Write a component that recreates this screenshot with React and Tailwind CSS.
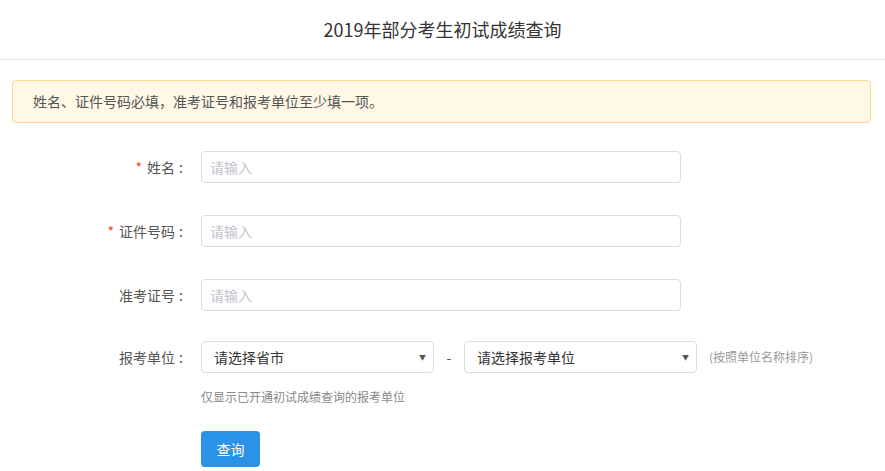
import React from 'react'

const font = { fontFamily: '"Noto Sans CJK SC", "Noto Sans", sans-serif' }

function Label({ required, children }) {
  return (
    <div className="w-[183px] shrink-0 text-right text-[14px] text-[#555]">
      {required && <span className="mr-[5px] text-[#e6461e]">*</span>}
      {children}
      <span className="ml-[4px]">:</span>
    </div>
  )
}

function TextRow({ label, required }) {
  return (
    <div className="flex h-[32px] items-center gap-[18px]">
      <Label required={required}>{label}</Label>
      <input
        placeholder="请输入"
        className="h-[32px] w-[480px] rounded-[4px] border border-[#dcdcdc] px-2 text-[14px] text-[#333] outline-none placeholder:text-[#c0c4cc]"
      />
    </div>
  )
}

function Select({ text }) {
  return (
    <div className="flex h-[32px] w-[233px] items-center justify-between rounded-[4px] border border-[#dcdcdc] pl-3 pr-[7px] text-[14px] text-[#333]">
      <span>{text}</span>
      <span className="text-[7px] text-[#555]">▼</span>
    </div>
  )
}

export default function App() {
  return (
    <div className="min-h-[471px] bg-white" style={font}>
      <div className="flex h-[60px] items-center justify-center border-b border-[#e5e5e5] text-[18px] text-[#333]">
        2019年部分考生初试成绩查询
      </div>

      <div className="mx-3 mt-5 flex h-[43px] items-center rounded-[4px] border border-[#fbd88e] bg-[#fff8e6] px-5 text-[14px] text-[#555] mr-[14px]">
        姓名、证件号码必填，准考证号和报考单位至少填一项。
      </div>

      <div className="mt-[28px] flex flex-col">
        <TextRow label="姓名" required />
        <div className="h-[32px]" />
        <TextRow label="证件号码" required />
        <div className="h-[32px]" />
        <TextRow label="准考证号" />
        <div className="h-[30px]" />

        <div className="flex h-[32px] items-center gap-[18px]">
          <Label>报考单位</Label>
          <div className="flex items-center">
            <Select text="请选择省市" />
            <span className="w-[30px] text-center text-[14px] text-[#555]">-</span>
            <Select text="请选择报考单位" />
            <span className="ml-3 text-[12px] text-[#999]">(按照单位名称排序)</span>
          </div>
        </div>

        <div className="ml-[201px] mt-[15px] text-[12px] text-[#888]">
          仅显示已开通初试成绩查询的报考单位
        </div>

        <div className="ml-[201px] mt-[25px]">
          <button className="h-[36px] w-[59px] rounded-[4px] bg-[#2b93e7] text-[14px] text-white">
            查询
          </button>
        </div>
      </div>
    </div>
  )
}
